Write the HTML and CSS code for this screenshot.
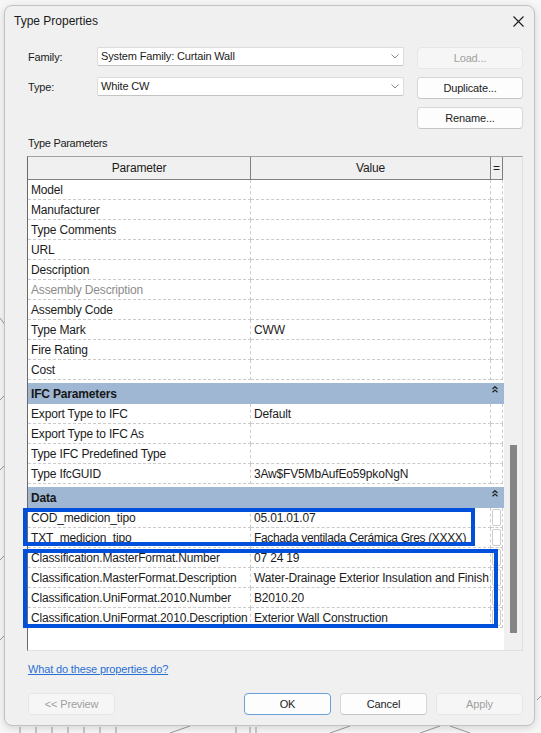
FILE: index.html
```html
<!DOCTYPE html>
<html>

  <head>
    <meta charset="utf-8">
    <title>Type Properties</title>
    <link rel="stylesheet" href="styles.css">
  </head>

  <body>
    <svg class="backdrop" width="541" height="733" viewBox="0 0 541 733">
      <path d="M0 318 L6 326 M0 400 L4 396 M0 470 L4 466 M0 560 L4 556 M0 640 L4 636" />
      <path d="M20 727 L20 733 M36 727 L36 733 M52 727 L52 733 M68 727 L68 733 M84 727 L84 733 M100 727 L100 733 M116 727 L116 733" />
      <path d="M170 733 L190 726 M236 727 L236 733 M250 727 L250 733 M256 727 L256 733 M330 733 L350 726 M420 733 L440 726 M470 733 L450 726 M537 700 L541 696" />
    </svg>

    <div id="dialog">
      <div class="titlebar">
        <span class="title">Type Properties</span>
        <svg class="close" width="11" height="11" viewBox="0 0 11 11">
          <path d="M0.5 0.5 L10.5 10.5 M10.5 0.5 L0.5 10.5" />
        </svg>
      </div>

      <div class="content">
        <div class="selectors">
          <div class="label">Family:</div>
          <div class="combo">
            <span>System Family: Curtain Wall</span>
            <svg width="8" height="5" viewBox="0 0 8 5"><path d="M0.5 0.5 L4 4 L7.5 0.5" /></svg>
          </div>
          <button class="btn" disabled>Load...</button>

          <div class="label">Type:</div>
          <div class="combo">
            <span>White CW</span>
            <svg width="8" height="5" viewBox="0 0 8 5"><path d="M0.5 0.5 L4 4 L7.5 0.5" /></svg>
          </div>
          <button class="btn">Duplicate...</button>

          <div></div>
          <div></div>
          <button class="btn">Rename...</button>
        </div>

        <div class="section">Type Parameters</div>

        <div class="frame">
          <div class="grid">
            <div class="row head">
              <div class="cell">Parameter</div>
              <div class="cell">Value</div>
              <div class="cell eq">=</div>
            </div>

            <div class="row"><div class="cell">Model</div><div class="cell"></div><div class="cell eq"></div></div>
            <div class="row"><div class="cell">Manufacturer</div><div class="cell"></div><div class="cell eq"></div></div>
            <div class="row"><div class="cell">Type Comments</div><div class="cell"></div><div class="cell eq"></div></div>
            <div class="row"><div class="cell">URL</div><div class="cell"></div><div class="cell eq"></div></div>
            <div class="row"><div class="cell">Description</div><div class="cell"></div><div class="cell eq"></div></div>
            <div class="row"><div class="cell dim">Assembly Description</div><div class="cell"></div><div class="cell eq"></div></div>
            <div class="row"><div class="cell">Assembly Code</div><div class="cell"></div><div class="cell eq"></div></div>
            <div class="row"><div class="cell">Type Mark</div><div class="cell">CWW</div><div class="cell eq"></div></div>
            <div class="row"><div class="cell">Fire Rating</div><div class="cell"></div><div class="cell eq"></div></div>
            <div class="row"><div class="cell">Cost</div><div class="cell"></div><div class="cell eq"></div></div>

            <div class="group">
              IFC Parameters
              <svg class="fold" width="6" height="7" viewBox="0 0 6 7"><path d="M0.5 3 L3 0.7 L5.5 3 M0.5 6.3 L3 4 L5.5 6.3" /></svg>
            </div>
            <div class="row"><div class="cell">Export Type to IFC</div><div class="cell">Default</div><div class="cell eq"></div></div>
            <div class="row"><div class="cell">Export Type to IFC As</div><div class="cell"></div><div class="cell eq"></div></div>
            <div class="row"><div class="cell">Type IFC Predefined Type</div><div class="cell"></div><div class="cell eq"></div></div>
            <div class="row"><div class="cell">Type IfcGUID</div><div class="cell">3Aw$FV5MbAufEo59pkoNgN</div><div class="cell eq"></div></div>

            <div class="group">
              Data
              <svg class="fold" width="6" height="7" viewBox="0 0 6 7"><path d="M0.5 3 L3 0.7 L5.5 3 M0.5 6.3 L3 4 L5.5 6.3" /></svg>
            </div>
            <div class="row"><div class="cell">COD_medicion_tipo</div><div class="cell">05.01.01.07</div><div class="cell eq"><span class="mini"></span></div></div>
            <div class="row"><div class="cell">TXT_medicion_tipo</div><div class="cell tight">Fachada ventilada Cerámica Gres (XXXX)</div><div class="cell eq"><span class="mini"></span></div></div>
            <div class="row"><div class="cell">Classification.MasterFormat.Number</div><div class="cell">07 24 19</div><div class="cell eq"><span class="mini"></span></div></div>
            <div class="row"><div class="cell">Classification.MasterFormat.Description</div><div class="cell">Water-Drainage Exterior Insulation and Finish</div><div class="cell eq"><span class="mini"></span></div></div>
            <div class="row"><div class="cell">Classification.UniFormat.2010.Number</div><div class="cell">B2010.20</div><div class="cell eq"><span class="mini"></span></div></div>
            <div class="row"><div class="cell">Classification.UniFormat.2010.Description</div><div class="cell">Exterior Wall Construction</div><div class="cell eq"><span class="mini"></span></div></div>
          </div>

          <div class="track">
            <div class="thumb"></div>
          </div>

          <div class="mark first"></div>
          <div class="mark second"></div>
        </div>

        <a class="help" href="#">What do these properties do?</a>

        <div class="actions">
          <button class="btn" disabled>&lt;&lt; Preview</button>
          <div class="spacer"></div>
          <button class="btn default">OK</button>
          <button class="btn">Cancel</button>
          <button class="btn" disabled>Apply</button>
        </div>
      </div>
    </div>
  </body>

</html>
```

FILE: styles.css
```css
* {
  box-sizing: border-box;
}

html,
body {
  margin: 0;
}

body {
  position: relative;
  width: 541px;
  height: 733px;
  overflow: hidden;
  background: #f7f7f7;
  font-family: "Liberation Sans", Arial, sans-serif;
  font-size: 12px;
  color: #1b1b1b;
}

.backdrop {
  position: absolute;
  left: 0;
  top: 0;
}

.backdrop path {
  stroke: #9a9a9a;
  stroke-width: 1;
  fill: none;
}

#dialog {
  position: relative;
  margin: 5px 0 0 4px;
  width: 531px;
  height: 721px;
  background: #f0f0f0;
  border: 1px solid #c2c2c2;
  border-radius: 8px;
  box-shadow: 0 2px 8px rgba(0, 0, 0, 0.15);
  display: flex;
  flex-direction: column;
}

.titlebar {
  height: 30px;
  padding: 0 10px 0 9px;
  display: flex;
  align-items: center;
  justify-content: space-between;
}

.close path {
  stroke: #1a1a1a;
  stroke-width: 1.1;
}

.content {
  padding: 0 11px 0 23px;
  display: flex;
  flex-direction: column;
  font-size: 11px;
  letter-spacing: -0.15px;
}

/* family / type pickers */

.selectors {
  margin-top: 11px;
  display: grid;
  grid-template-columns: 56px 307px 106px;
  grid-auto-rows: 22px;
  column-gap: 13px;
  row-gap: 8px;
}

.selectors .label {
  line-height: 19px;
  padding-top: 1px;
}

.combo {
  height: 19px;
  background: #fff;
  border: 1px solid #dcdcdc;
  border-bottom-color: #c4c4c4;
  border-radius: 2px;
  padding: 0 4px 0 3px;
  display: flex;
  align-items: center;
  justify-content: space-between;
  line-height: 17px;
}

.combo path {
  stroke: #8a8a8a;
  stroke-width: 1;
  fill: none;
}

.btn {
  height: 22px;
  background: #fdfdfd;
  border: 1px solid #d6d6d6;
  border-bottom-color: #c6c6c6;
  border-radius: 4px;
  font-family: inherit;
  font-size: 11px;
  letter-spacing: -0.15px;
  color: #1b1b1b;
  padding: 0;
}

.btn:disabled {
  background: #f6f6f6;
  border-color: #e6e6e6;
  color: #a0a0a0;
}

.btn.default {
  border-color: #6c9fd8;
}

.section {
  margin-top: 6px;
  line-height: 16px;
  letter-spacing: -0.3px;
}

/* parameter table */

.frame {
  position: relative;
  margin: 5px 0 0 -1px;
  height: 495px;
  border: 1px solid #e0e0e0;
  border-top-color: #a3a3a3;
  border-left-color: #6a6a6a;
  background: #f0f0f0;
  display: flex;
  font-size: 12px;
}

.grid {
  width: 476px;
  background: #fff;
  letter-spacing: -0.17px;
}

.row {
  display: grid;
  grid-template-columns: 223px 240px 12px;
  height: 20px;
}

.cell {
  border-right: 1px dashed #cbcbcb;
  border-bottom: 1px dashed #cbcbcb;
  padding: 1px 0 0 3px;
  line-height: 18px;
  white-space: nowrap;
  overflow: hidden;
}

.cell.tight {
  letter-spacing: -0.35px;
}

.cell.eq {
  padding: 0;
}

.cell.dim {
  color: #8c8c8c;
}

.row.head {
  height: 23px;
  background: #f0f0f0;
}

.row.head .cell {
  border-right: 1px solid #808080;
  border-bottom: 1px solid #808080;
  text-align: center;
  line-height: 22px;
  padding: 0;
}

.mini {
  display: block;
  width: 9px;
  height: 17px;
  margin: 1px 0 0 1px;
  background: #fff;
  border: 1px solid #cdcdcd;
  border-radius: 2px;
}

.group {
  position: relative;
  height: 21px;
  margin-top: 3px;
  background: #a0b7d3;
  padding: 1px 0 0 3px;
  font-weight: bold;
  line-height: 20px;
  color: #161616;
}

.fold {
  position: absolute;
  right: 6px;
  top: 3px;
}

.fold path {
  stroke: #222;
  stroke-width: 1.2;
  fill: none;
}

.track {
  flex: 1;
}

.thumb {
  margin: 288px 0 0 6px;
  width: 7px;
  height: 188px;
  background: #858585;
}

.mark {
  position: absolute;
  left: -5px;
  border: 4px solid #0050dc;
}

.mark.first {
  top: 351px;
  width: 452px;
  height: 38px;
}

.mark.second {
  top: 392px;
  width: 475px;
  height: 79px;
}

.help {
  margin-top: 10px;
  line-height: 16px;
  color: #2a70d4;
  align-self: flex-start;
}

.actions {
  margin-top: 16px;
  display: flex;
  gap: 9px;
}

.actions .btn {
  width: 87px;
}

.actions .spacer {
  flex: 1;
}
```
